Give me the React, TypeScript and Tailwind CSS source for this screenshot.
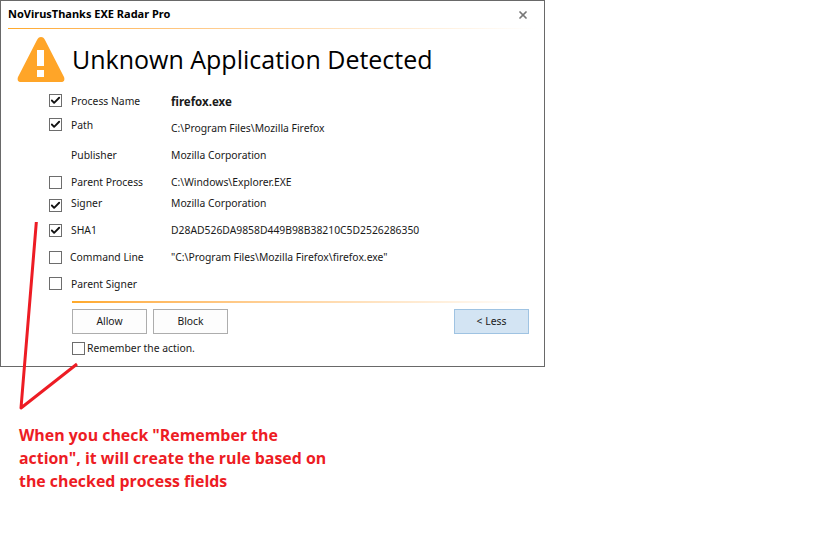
import { Check, X } from "lucide-react";

type Field = {
  label: string;
  value?: string;
  checked?: boolean;
  noBox?: boolean;
  height: string;
  boxClass?: string;
  labelClass?: string;
  valueClass?: string;
};

const fields: Field[] = [
  { label: "Process Name", value: "firefox.exe", checked: true, valueClass: "text-[11.5px] font-bold", height: "h-[25px]", boxClass: "-translate-y-px" },
  { label: "Path", value: "C:\\Program Files\\Mozilla Firefox", checked: true, height: "h-[27px]", boxClass: "-translate-y-[3px]", labelClass: "-translate-y-[2px]", valueClass: "translate-y-px" },
  { label: "Publisher", value: "Mozilla Corporation", noBox: true, height: "h-[29px]" },
  { label: "Parent Process", value: "C:\\Windows\\Explorer.EXE", height: "h-[24px]", labelClass: "translate-y-px", valueClass: "translate-y-px" },
  { label: "Signer", value: "Mozilla Corporation", checked: true, height: "h-[23px]", labelClass: "-translate-y-[2px]", valueClass: "-translate-y-[2px]" },
  { label: "SHA1", value: "D28AD526DA9858D449B98B38210C5D2526286350", checked: true, height: "h-[27px]" },
  { label: "Command Line", value: "\"C:\\Program Files\\Mozilla Firefox\\firefox.exe\"", height: "h-[27px]", labelClass: "-translate-x-px" },
  { label: "Parent Signer", height: "h-[27px]", boxClass: "-translate-y-px" },
];

function CheckBox({ checked, className = "" }: { checked?: boolean; className?: string }) {
  return (
    <span className={`flex h-[13px] w-[13px] shrink-0 items-center justify-center border border-[#6d6d6d] bg-white ${className}`}>
      {checked && <Check size={11} strokeWidth={4} className="text-[#111]" />}
    </span>
  );
}

function FieldRow({ field }: { field: Field }) {
  return (
    <div className={`flex items-center ${field.height}`}>
      <div className="w-[22px] shrink-0">
        {!field.noBox && <CheckBox checked={field.checked} className={field.boxClass} />}
      </div>
      <span className={`w-[100px] shrink-0 ${field.labelClass ?? ""}`}>{field.label}</span>
      {field.value && <span className={field.valueClass ?? ""}>{field.value}</span>}
    </div>
  );
}

function Button({ label, className = "" }: { label: string; className?: string }) {
  return (
    <button className={`flex h-[25px] w-[75px] items-center justify-center border ${className}`}>
      {label}
    </button>
  );
}

export default function App() {
  return (
    <div className="relative h-[535px] w-[816px] bg-white font-['Noto_Sans',sans-serif] text-[10.35px] text-[#1a1a1a]">
      <div className="flex h-[367px] w-[545px] flex-col border border-[#696969] bg-white">
        {/* Title */}
        <div className="flex h-[27px] items-center justify-between pl-[7px] pr-[15px]">
          <span className="text-[11px] font-bold text-black">NoVirusThanks EXE Radar Pro</span>
          <X size={12} strokeWidth={3.5} className="text-[#777]" />
        </div>
        <div className="mx-[7px] h-px w-[528px] bg-gradient-to-r from-[#ffa928] to-white" />

        {/* Heading */}
        <div className="flex h-[58px] items-center pl-[16px] pt-[3px]">
          <svg width="48" height="45" viewBox="0 0 48 45" className="shrink-0">
            <path d="M24 0 C22 0 21 1 20 3 L1 40 C0 43 1 45 4 45 L44 45 C47 45 48 43 47 40 L28 3 C27 1 26 0 24 0 Z" fill="#ffa528" />
            <rect x="20" y="13" width="7" height="16" fill="#fff" />
            <rect x="20" y="33" width="7" height="7" fill="#fff" />
          </svg>
          <h1 className="ml-[7px] font-['Open_Sans',sans-serif] text-[25px] leading-none text-black">
            Unknown Application Detected
          </h1>
        </div>

        {/* Fields */}
        <div className="flex flex-col pl-[48px] pt-[2px]">
          {fields.map((field) => (
            <FieldRow key={field.label} field={field} />
          ))}
        </div>

        {/* Footer */}
        <div className="ml-[71px] mt-[3px] h-[2px] w-[458px] bg-gradient-to-r from-[#ffa928] to-white" />
        <div className="ml-[71px] mt-[6px] flex w-[457px] gap-[6px]">
          <Button label="Allow" className="border-[#adadad] bg-[#fdfdfd]" />
          <Button label="Block" className="border-[#adadad] bg-[#fdfdfd]" />
          <Button label="< Less" className="ml-auto border-[#9fc3e2] bg-[#d3e4f3]" />
        </div>
        <div className="ml-[71px] mt-[7px] flex items-center gap-[2px]">
          <CheckBox />
          <span>Remember the action.</span>
        </div>
      </div>

      {/* Red annotation */}
      <svg width="90" height="190" viewBox="0 0 90 190" className="absolute left-0 top-[222px]">
        <path d="M37 -8 L21 186 L77 142" fill="none" stroke="#ed1c24" strokeWidth="3" strokeLinejoin="round" />
      </svg>
      <p className="absolute left-[19px] top-[424px] w-[320px] font-['Open_Sans',sans-serif] text-[15.9px] font-bold leading-[23px] text-[#ed1c24]">
        When you check "Remember the
        <br />
        action", it will create the rule based on
        <br />
        the checked process fields
      </p>
    </div>
  );
}
